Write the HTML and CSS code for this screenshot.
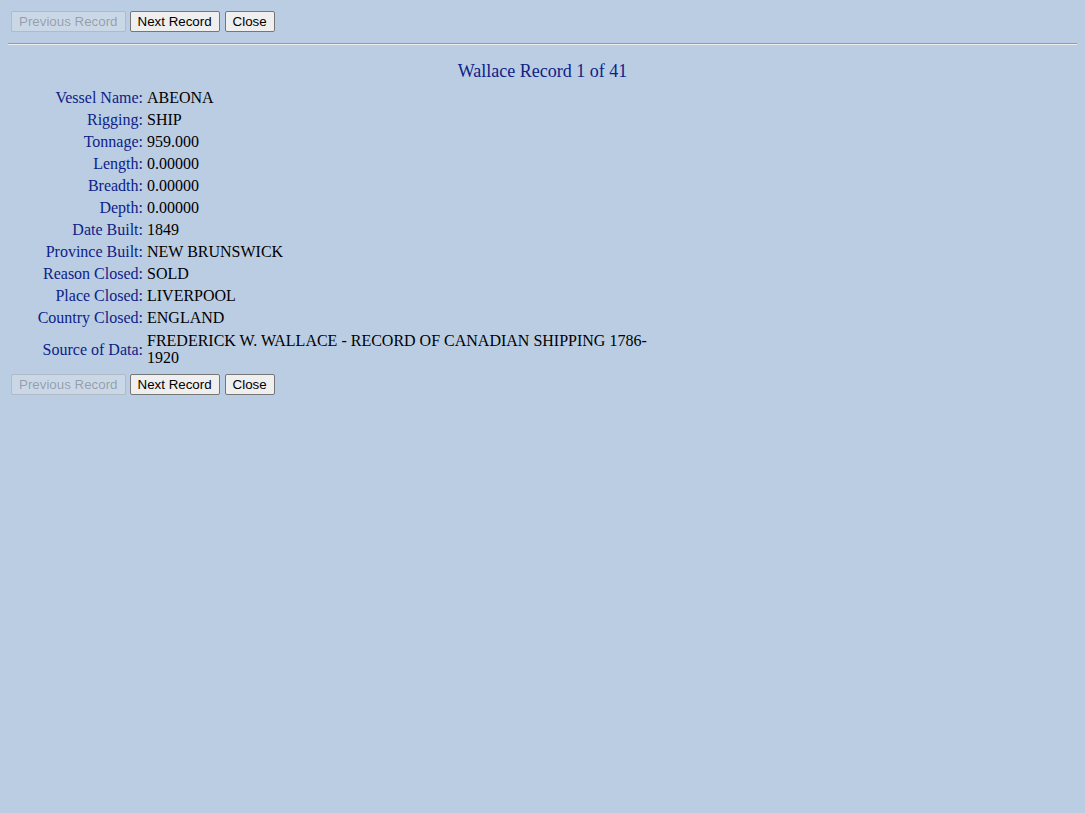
FILE: index.html
```html
<!DOCTYPE html>
<html>
<head>
<meta charset="utf-8">
<title>Wallace Record</title>
<link rel="stylesheet" href="styles.css">
</head>
<body>
<div class="nav">
  <button class="btn" disabled>Previous Record</button>
  <button class="btn">Next Record</button>
  <button class="btn btn-close">Close</button>
</div>
<hr class="rule">
<div class="title">Wallace Record 1 of 41</div>
<table class="record">
  <tr><td class="label">Vessel Name:</td><td class="value">ABEONA</td></tr>
  <tr><td class="label">Rigging:</td><td class="value">SHIP</td></tr>
  <tr><td class="label">Tonnage:</td><td class="value">959.000</td></tr>
  <tr><td class="label">Length:</td><td class="value">0.00000</td></tr>
  <tr><td class="label">Breadth:</td><td class="value">0.00000</td></tr>
  <tr><td class="label">Depth:</td><td class="value">0.00000</td></tr>
  <tr><td class="label">Date Built:</td><td class="value">1849</td></tr>
  <tr><td class="label">Province Built:</td><td class="value">NEW BRUNSWICK</td></tr>
  <tr><td class="label">Reason Closed:</td><td class="value">SOLD</td></tr>
  <tr><td class="label">Place Closed:</td><td class="value">LIVERPOOL</td></tr>
  <tr><td class="label">Country Closed:</td><td class="value">ENGLAND</td></tr>
  <tr><td class="label">Source of Data:</td><td class="value value-multi">FREDERICK W. WALLACE - RECORD OF CANADIAN SHIPPING 1786-1920</td></tr>
</table>
<div class="nav">
  <button class="btn" disabled>Previous Record</button>
  <button class="btn">Next Record</button>
  <button class="btn btn-close">Close</button>
</div>
</body>
</html>
```
FILE: styles.css
```css
html, body {
  background: #bbcde2;
}
body {
  margin: 8px;
  font-family: "Liberation Serif", "Times New Roman", serif;
  font-size: 16px;
  color: #000;
}
.nav {
  display: flex;
  gap: 4px;
  padding: 3px;
}
.btn {
  font-family: "Liberation Sans", Arial, sans-serif;
  font-size: 13.333px;
  padding: 1px 7px;
  margin: 0;
  height: 21px;
  line-height: 16px;
  color: #000;
  background: #efefef;
  border: 1px solid #767676;
  border-radius: 2px;
}
.btn-close {
  margin-left: 1px;
}
.btn:disabled {
  color: rgba(16, 16, 16, 0.3);
  background: rgba(239, 239, 239, 0.3);
  border-color: rgba(118, 118, 118, 0.3);
}
.rule {
  margin: 8px 0;
  border: 0;
  border-top: 1px solid #9a9a9a;
  border-bottom: 1px solid #eeeeee;
  height: 0;
}
.title {
  text-align: center;
  font-size: 18px;
  color: #0c2288;
  margin: 16px 0 4px;
}
.record {
  border-collapse: separate;
  border-spacing: 2px;
  width: 660px;
  margin-left: 1px;
}
.record td {
  padding: 1px;
  line-height: 18px;
}
.record td.value-multi {
  padding-top: 2px;
  padding-bottom: 3px;
  line-height: 17px;
}
.label {
  text-align: right;
  color: #0c2288;
  width: 131px;
  white-space: nowrap;
  vertical-align: middle;
}
.value {
  color: #000;
}
```
